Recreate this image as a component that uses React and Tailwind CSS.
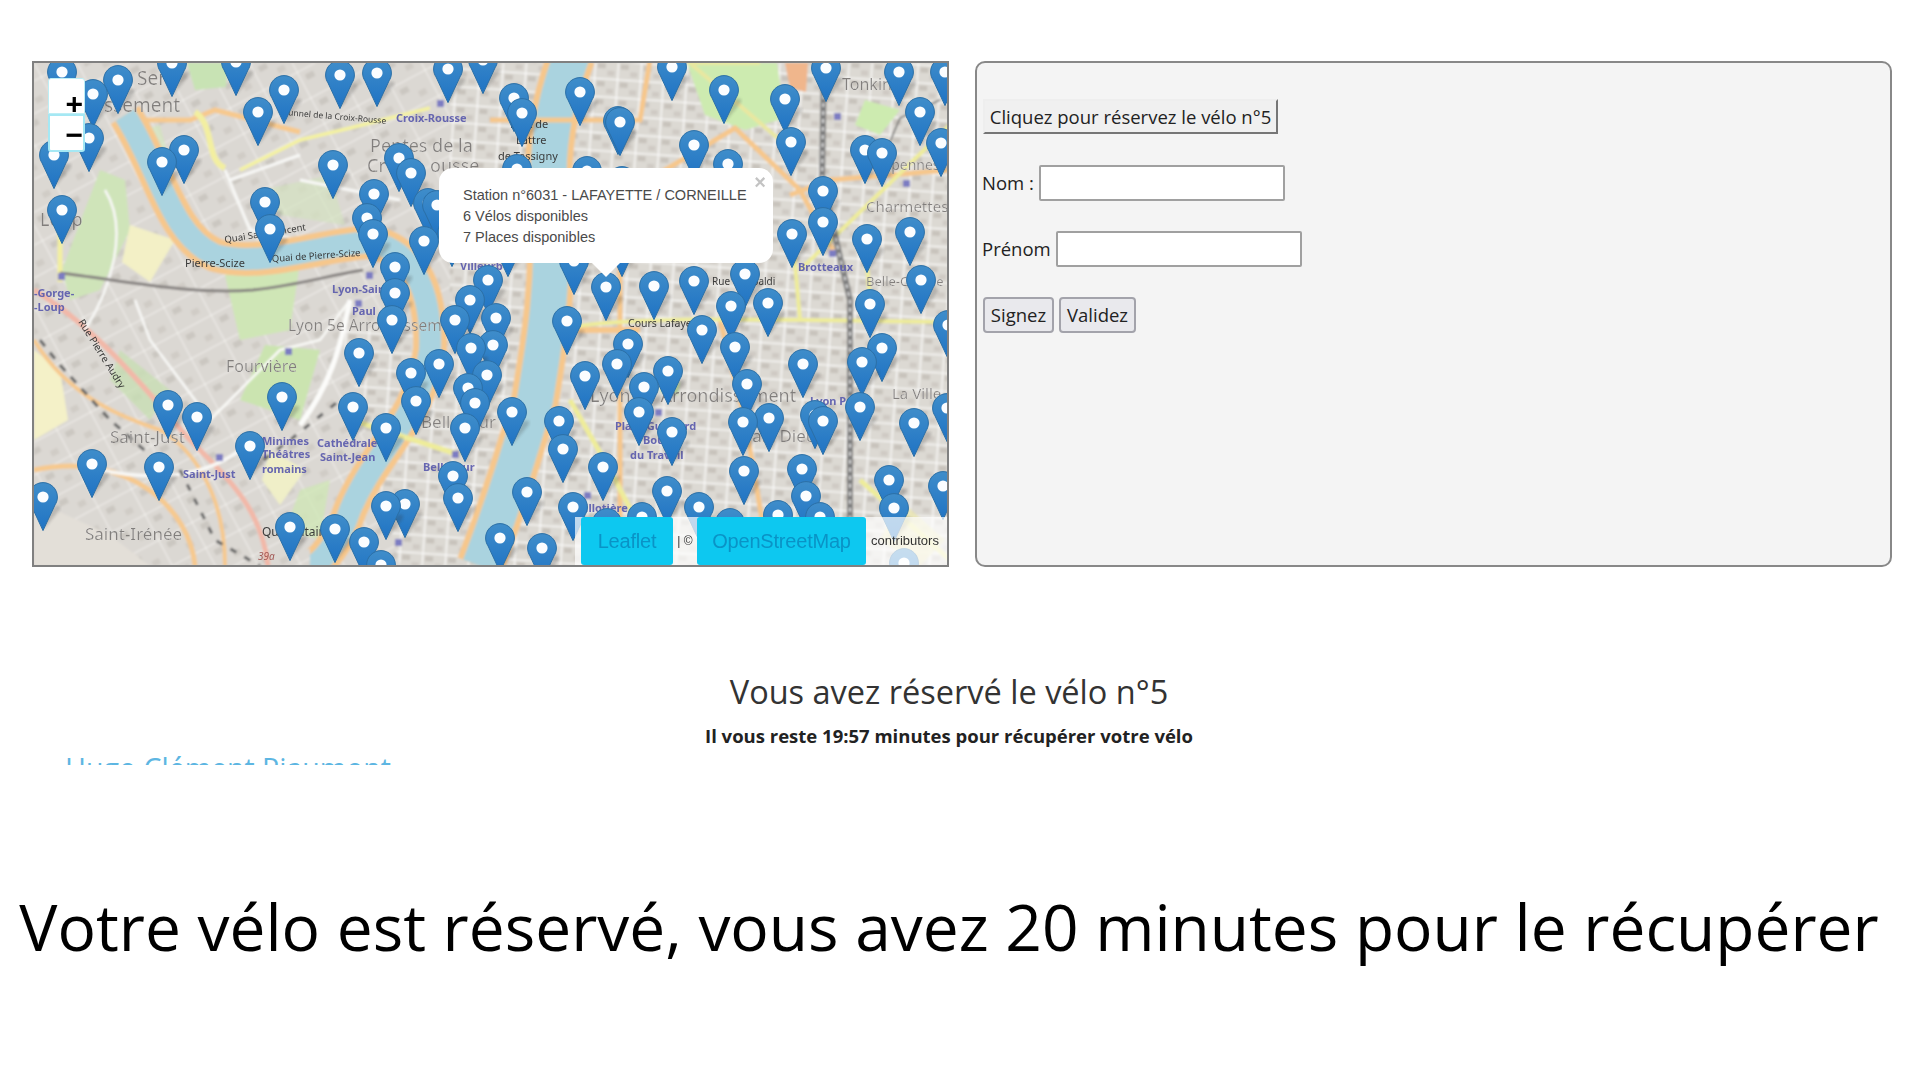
import React from "react";

const PINS = [[62,72],[118,80],[172,63],[236,62],[284,90],[258,112],[340,75],[377,73],[448,69],[483,60],[93,94],[89,138],[54,155],[162,162],[184,150],[333,165],[399,158],[411,173],[62,210],[265,202],[270,229],[374,194],[367,218],[373,234],[424,241],[428,203],[437,205],[395,267],[395,293],[392,320],[488,280],[470,300],[455,320],[496,318],
[514,98],[522,113],[580,92],[618,121],[517,169],[587,171],[622,181],[574,261],[508,243],[622,243],[452,233],
[672,67],[724,90],[785,99],[826,68],[899,72],[945,72],[920,112],[941,143],[865,150],[882,153],[791,142],[694,145],[728,164],[620,122],[823,191],[823,222],[792,234],[867,239],[910,232],[921,280],[870,304],[745,274],[694,281],[654,286],[731,306],[768,303],[606,287],[948,325],
[567,321],[628,344],[702,330],[735,347],[617,364],[668,371],[585,376],[644,387],[747,384],[803,364],[862,362],[882,348],[860,407],[512,412],[559,421],[563,449],[639,412],[672,432],[743,422],[769,418],[815,415],[823,421],[914,423],[947,408],[603,467],[744,471],[802,469],[806,496],[889,480],[894,508],[943,486],[527,492],[573,507],[667,491],[699,507],[642,517],[607,523],[778,515],[820,517],[500,538],[542,548],[730,523],[904,563],
[359,353],[411,373],[439,364],[471,348],[487,375],[493,345],[468,388],[475,403],[465,428],[416,401],[282,397],[353,407],[386,428],[168,405],[197,417],[250,446],[92,464],[159,467],[43,497],[453,476],[458,498],[386,506],[405,504],[290,527],[335,529],[364,542],[381,565]
].sort((a, b) => a[1] - b[1]);

const GREY = [
  ["ssement",104,112,19],["Ser",137,85,19],["Pentes de la",370,152,18],["Cr",367,172,18],["ousse",430,172,18],["Loup",40,226,18],
  ["Lyon 5e Arrondissement",288,331,15.5],["Fourvière",226,372,16],["Saint-Just",110,443,17],["Saint-Irénée",85,540,17],["Bellecour",421,428,17],
  ["Lyon 3e Arrondissement",590,402,18],["Part Dieu",742,442,17],["La Ville",892,399,15],["Tonkin",842,90,16],["Charpennes",860,170,14],["Charmettes",866,212,15],["Belle-Combe",866,286,13],
];
const BLUE = [
  ["Croix-Rousse",396,122],["-Gorge-",34,297],["-Loup",34,311],["Lyon-Saint-",332,293],["Paul",352,315],["Minimes",262,445],["Théâtres",262,458],["romains",262,473],["Cathédrale",317,447],["Saint-Jean",320,461],["Saint-Just",183,478],["Bellecour",423,471],["Place Guichard",615,430],["Bourse",643,444],["du Travail",630,459],["Lyon Part",810,405],["Brotteaux",798,271],["Guillotière",570,512],["Villeurb",460,270],
];
const DARK = [
  ["Parc de",510,128,11],["Lattre",516,144,11],["de Tassigny",498,160,11],["Cours Lafayette",628,327,10.5],["Rue Garibaldi",712,285,10],["Quarantaine",262,536,12],["Pierre-Scize",185,267,11],
];
const SQUARES = [[437,100],[58,273],[366,272],[285,348],[216,454],[452,451],[395,539],[584,492],[655,409],[834,113],[903,180],[829,250],[355,300]];

function MapArt() {
  return (
    <svg viewBox="34 63 913 502" className="block w-full h-full" style={{ fontFamily: "'Noto Sans', sans-serif" }}>
      <defs>
        <pattern id="blocksE" width="23" height="18" patternUnits="userSpaceOnUse" patternTransform="rotate(4)">
          <rect width="23" height="18" fill="#dcd9d3" />
          <rect x="3" y="3" width="8" height="5" fill="#c8c3bc" />
          <rect x="13" y="10" width="7" height="5" fill="#cfcac4" />
          <path d="M0 0H23M0 0V18" stroke="#ffffff" strokeWidth="2.2" />
        </pattern>
        <pattern id="blocksW" width="38" height="29" patternUnits="userSpaceOnUse" patternTransform="rotate(-28)">
          <rect width="38" height="29" fill="#dbd8d3" />
          <rect x="6" y="6" width="9" height="6" fill="#cbc7c1" />
          <rect x="22" y="16" width="8" height="6" fill="#d0ccc6" />
          <path d="M0 0H38M0 0V29" stroke="#f7f6f3" strokeWidth="1.5" />
        </pattern>
        <linearGradient id="pinFill" x1="0" y1="0" x2="0" y2="1">
          <stop offset="0" stopColor="#3f8dca" />
          <stop offset="1" stopColor="#1f73c4" />
        </linearGradient>
        <filter id="soft"><feGaussianBlur stdDeviation="0.8" /></filter>
        <filter id="shadow"><feGaussianBlur stdDeviation="1.6" /></filter>
        <g id="pin">
          <path d="M15 48 L30 30 Q36 22 26 24 L17 32Z" fill="#333333" opacity="0.22" filter="url(#shadow)" />
          <path d="M15 .6C7 .6.6 7 .6 15c0 2.9.8 5.5 2.4 7.9L15 48.6l12-25.7c1.6-2.4 2.4-5 2.4-7.9C29.4 7 23 .6 15 .6z" fill="url(#pinFill)" stroke="#2b6fa6" strokeWidth="1" />
          <circle cx="15" cy="15" r="5.6" fill="#fbfdff" />
        </g>
      </defs>

      <g filter="url(#soft)">
        <rect x="34" y="63" width="915" height="503" fill="url(#blocksW)" />
        <rect x="450" y="63" width="500" height="503" fill="url(#blocksE)" />
        <path d="M340 330H520V566H400Z" fill="url(#blocksE)" />

        <path d="M187 63L228 63 226 87 195 90Z" fill="#c8e3b4" />
        <path d="M100 170L125 180 130 230 100 290 70 300 62 270Z" fill="#cfe4b9" />
        <path d="M130 225L175 240 150 282 122 262Z" fill="#f3f0c6" />
        <path d="M140 130L160 125 190 240 170 230Z" fill="#d3e6bc" opacity="0.7" />
        <path d="M225 275L300 262 290 330 240 340Z" fill="#cfe6b6" />
        <path d="M262 190L330 175 345 225 280 215Z" fill="#d4e3c0" opacity="0.7" />
        <path d="M265 345L320 350 300 420 240 400Z" fill="#cbe4b0" />
        <path d="M34 350L60 370 68 420 34 440Z" fill="#f4f1c8" />
        <path d="M120 350L170 390 150 420 110 380Z" fill="#c7dfb2" opacity="0.75" />
        <path d="M270 450L305 470 280 505 262 480Z" fill="#f0efc8" />
        <path d="M34 500L110 535 150 566H34Z" fill="#e3dfd8" />
        <path d="M300 490L330 480 320 540 285 530Z" fill="#cfe6b6" opacity="0.8" />
        <path d="M687 63L777 63 785 118 745 130 705 115Z" fill="#cdebb0" />
        <path d="M785 63L808 63 806 92 790 88Z" fill="#f0b68c" />
        <path d="M865 100L900 110 880 135 855 125Z" fill="#cdebb0" />
        <path d="M660 380L680 382 678 395 660 392Z" fill="#cdebb0" />
        <path d="M900 500L945 540 920 566 880 540Z" fill="#e9e6a8" opacity="0.7" />

        <path d="M34 470C130 450 190 510 195 566" fill="none" stroke="#f6c98f" strokeWidth="5" />
        <path d="M34 290C100 330 150 395 190 440 230 480 262 510 268 566" fill="none" stroke="#f2b8a8" strokeWidth="5" />
        <path d="M34 340C70 400 130 420 160 430 180 440 225 480 225 566" fill="none" stroke="#f6c98f" strokeWidth="4" />
        <path d="M100 470C150 480 200 480 240 450" fill="none" stroke="#f8f8f6" strokeWidth="3.5" />
        <path d="M125 120H190L215 110 300 132" fill="none" stroke="#f7c98e" strokeWidth="5" />
        <path d="M240 170L300 140 350 128 430 108" fill="none" stroke="#f4f2a0" strokeWidth="3.5" />
        <path d="M195 112C215 125 205 160 225 168" fill="none" stroke="#f3efa0" strokeWidth="6" />
        <path d="M60 225V282" stroke="#f2efa0" strokeWidth="5" />
        <path d="M225 170L250 230 300 240M300 180L350 190 400 200M230 180L300 155" fill="none" stroke="#f8f8f6" strokeWidth="3" />
        <path d="M105 190C130 230 110 290 85 330M135 300L150 340 210 420" fill="none" stroke="#f8f8f6" strokeWidth="2.5" />
        <path d="M210 420L280 350 320 340 350 300" fill="none" stroke="#f9f9f6" strokeWidth="2.5" />
        <path d="M300 425C330 385 340 350 350 300" fill="none" stroke="#fcfcfa" strokeWidth="5" />

        <path d="M125 115C160 170 170 235 215 255 260 268 320 245 370 242 415 250 432 295 430 350 420 420 375 450 350 510 340 540 320 566 310 566" fill="none" stroke="#f6c78c" strokeWidth="34" />
        <path d="M125 115C160 170 170 235 215 255 260 268 320 245 370 242 415 250 432 295 430 350 420 420 375 450 350 510 340 540 320 566 310 566" fill="none" stroke="#aad3df" strokeWidth="22" />
        <path d="M572 55C555 100 545 150 550 200 555 280 545 340 535 400 520 450 505 500 480 566" fill="none" stroke="#f6c78c" strokeWidth="48" />
        <path d="M572 55C555 100 545 150 550 200 555 280 545 340 535 400 520 450 505 500 480 566" fill="none" stroke="#aad3df" strokeWidth="36" />

        <path d="M490 120H640L650 60" fill="none" stroke="#f6c78c" strokeWidth="5" />
        <path d="M590 215L735 128 800 190 833 250" fill="none" stroke="#f6c78c" strokeWidth="5" />
        <path d="M760 63L690 63 780 140" fill="none" stroke="#e9e7a0" strokeWidth="4" />
        <path d="M620 260V566" stroke="#f6c78c" strokeWidth="5" />
        <path d="M560 330H640" stroke="#f6c78c" strokeWidth="6" />
        <path d="M570 400L610 470 660 566" fill="none" stroke="#eeec9a" strokeWidth="5" />
        <path d="M720 320L745 420 770 566" fill="none" stroke="#f6c78c" strokeWidth="5" />
        <path d="M790 195L830 180 950 170" fill="none" stroke="#f6c78c" strokeWidth="5" />
        <path d="M800 270L950 125" fill="none" stroke="#eeec9a" strokeWidth="4" />
        <path d="M793 240L800 320M865 240L870 300" fill="none" stroke="#eeec9a" strokeWidth="4" />
        <path d="M565 328C640 315 780 320 945 322" fill="none" stroke="#eeec9a" strokeWidth="4" />
        <path d="M860 480L950 560" fill="none" stroke="#eeec9a" strokeWidth="5" />
        <path d="M352 420L460 455" stroke="#eeec9a" strokeWidth="5" />

        <path d="M824 63L822 180 850 300 850 566" fill="none" stroke="#7d7d7d" strokeWidth="6" />
        <path d="M824 63L822 180 850 300 850 566" fill="none" stroke="#d8d8d8" strokeWidth="2" strokeDasharray="4 4" />
        <path d="M60 273C120 280 190 295 253 290 300 285 330 275 363 270" fill="none" stroke="#868280" strokeWidth="3" />
        <path d="M40 340L60 365 110 420 150 455" fill="none" stroke="#666" strokeWidth="3" strokeDasharray="8 8" />
        <path d="M250 470L290 440 340 400" fill="none" stroke="#666" strokeWidth="3" strokeDasharray="7 10" />
        <path d="M180 470L215 540 260 566" fill="none" stroke="#666" strokeWidth="3" strokeDasharray="7 9" />
        <path d="M880 165L900 118 940 100" fill="none" stroke="#6f6f6f" strokeWidth="1.6" />

        {SQUARES.map(([x, y], i) => <rect key={i} x={x} y={y} width="7" height="7" fill="#7b7bc2" />)}
      </g>

      <g opacity="0.95">
        {GREY.map(([t, x, y, s], i) => <text key={i} x={x} y={y} fontSize={s} fill="#7d7a78" stroke="#ffffff" strokeWidth="0.15">{t}</text>)}
        {BLUE.map(([t, x, y], i) => <text key={i} x={x} y={y} fontSize="11" fontWeight="700" fill="#5f5fae">{t}</text>)}
        {DARK.map(([t, x, y, s], i) => <text key={i} x={x} y={y} fontSize={s} fill="#333333">{t}</text>)}
        <text x="285" y="115" fontSize="8.5" fill="#333" transform="rotate(5 285 115)">tunnel de la Croix-Rousse</text>
        <text x="225" y="243" fontSize="9.5" fill="#333" transform="rotate(-9 225 243)">Quai Saint-Vincent</text>
        <text x="272" y="262" fontSize="9.5" fill="#333" transform="rotate(-4 272 262)">Quai de Pierre-Scize</text>
        <text x="78" y="322" fontSize="10" fill="#333" transform="rotate(58 78 322)">Rue Pierre Audry</text>
        <text x="258" y="560" fontSize="10" fontStyle="italic" fill="#a0524f">39a</text>
      </g>

      {PINS.map(([x, y], i) => <use key={i} href="#pin" x={x - 15} y={y - 15} />)}
    </svg>
  );
}

export default function App() {
  return (
    <div className="w-[1898px] min-h-screen bg-white pt-[61px] font-['Open_Sans',sans-serif]">
      <div className="flex gap-[26px] pl-[32px]">
        <div className="relative w-[917px] h-[506px] border-2 border-[#808080] overflow-hidden bg-[#d9d5cf]">
          <MapArt />
          <div className="absolute left-[14px] top-[15px] w-[37px]">
            <div className="h-[36px] bg-white rounded-t-[3px] border border-[#bdeef5] flex items-start justify-end pt-[7px] pr-[1px] font-['Liberation_Sans',sans-serif] text-[30px] leading-[36px] font-bold text-black">+</div>
            <div className="h-[38px] bg-white rounded-b-[3px] border-2 border-[#a5e8f4] flex items-start justify-end pt-[1px] font-['Liberation_Sans',sans-serif] text-[30px] leading-[36px] font-bold text-black">−</div>
          </div>
          <div className="absolute left-[405px] top-[105px] w-[334px] h-[95px] bg-white rounded-[14px] pl-[24px] pt-[17px] font-['Liberation_Sans',sans-serif] text-[14.5px] leading-[21px] text-[#4a4a4a]">
            <div>Station n°6031 - LAFAYETTE / CORNEILLE</div>
            <div>6 Vélos disponibles</div>
            <div>7 Places disponibles</div>
            <span className="absolute right-[7px] top-[4px] text-[20px] leading-[20px] font-bold text-[#c3c3c3]">×</span>
            <svg className="absolute left-[153px] top-[95px]" width="28" height="14" viewBox="0 0 28 14"><path d="M0 0H28L14 14Z" fill="#ffffff" /></svg>
          </div>
          <div className="absolute right-0 bottom-0 w-[372px] h-[48px] bg-white/70 flex items-center pl-[6px] font-['Liberation_Sans',sans-serif] text-[#333333]">
            <a className="w-[92px] h-full rounded-[3px] bg-[#0dc8f0] flex items-center justify-center text-[20px] tracking-[-0.2px] text-[#0a93c6]">Leaflet</a>
            <span className="w-[24px] text-center text-[12px] whitespace-nowrap">| ©</span>
            <a className="w-[169px] h-full rounded-[3px] bg-[#0dc8f0] flex items-center justify-center text-[20px] tracking-[-0.2px] text-[#0a93c6]">OpenStreetMap</a>
            <span className="ml-[5px] text-[13px] whitespace-nowrap">contributors</span>
          </div>
        </div>

        <div className="w-[917px] h-[506px] border-2 border-[#888888] rounded-[10px] bg-[#f4f4f4] pl-[6px] pt-[36px] text-[18.5px] text-[#222222]">
          <button className="block h-[35px] w-[295px] bg-[#f0f0f0] border-2 border-t-[#eeeeee] border-l-[#eeeeee] border-r-[#767676] border-b-[#767676] text-[18.5px] leading-[28px] whitespace-nowrap">Cliquez pour réservez le vélo n°5</button>
          <div className="flex items-center gap-[5px] mt-[31px] h-[36px]">
            <label className="-ml-[1px]">Nom :</label>
            <input className="w-[246px] h-[36px] bg-white border-2 border-[#a0a0a0] rounded-[2px]" />
          </div>
          <div className="flex items-center gap-[5px] mt-[30px] h-[36px]">
            <label className="-ml-[1px]">Prénom</label>
            <input className="w-[246px] h-[36px] bg-white border-2 border-[#a0a0a0] rounded-[2px]" />
          </div>
          <div className="flex gap-[5px] mt-[30px]">
            <button className="w-[71px] h-[36px] bg-[#e9e9ed] border-2 border-[#a3a3ab] rounded-[4px] text-[18.5px]">Signez</button>
            <button className="w-[77px] h-[36px] bg-[#e9e9ed] border-2 border-[#a3a3ab] rounded-[4px] text-[18.5px]">Validez</button>
          </div>
        </div>
      </div>

      <h2 className="mt-[103px] text-center text-[32.5px] leading-[44px] text-[#333333]">Vous avez réservé le vélo n°5</h2>
      <p className="mt-[9px] text-center text-[18.5px] leading-[25px] font-bold text-[#222222]">Il vous reste 19:57 minutes pour récupérer votre vélo</p>
      <div className="h-[17px] overflow-hidden pl-[65px] pt-[1px] text-[28.5px] leading-[38px] text-[#5db6e2]">Hugo Clément Piaumont</div>
      <h1 className="mt-[118px] text-center text-[64px] leading-[88px] text-black whitespace-nowrap">Votre vélo est réservé, vous avez 20 minutes pour le récupérer</h1>
    </div>
  );
}
